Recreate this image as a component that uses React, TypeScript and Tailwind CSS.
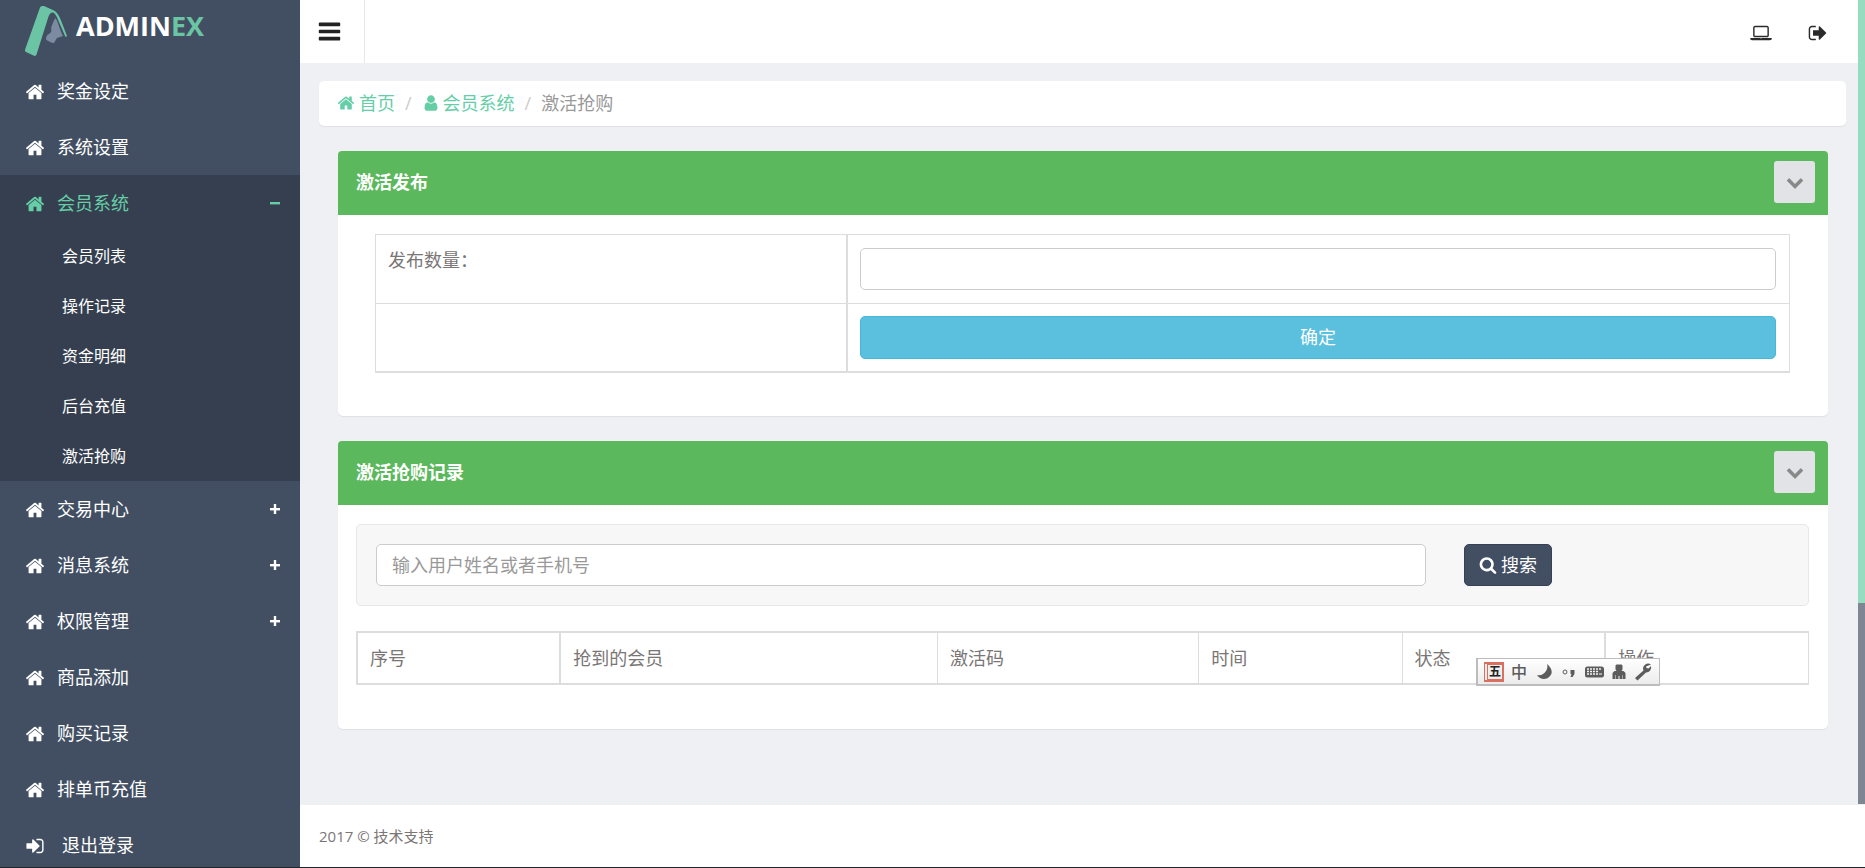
import React, { useState } from "react";
import clsx from "clsx";

const ICONS = {
  home: "M1472 992v480q0 26-19 45t-45 19h-384v-384h-256v384h-384q-26 0-45-19t-19-45v-480q0-1 .5-3t.5-3l575-474 575 474q1 2 1 6zm223-69l-62 74q-8 9-21 11h-3q-13 0-21-7l-692-577-692 577q-12 8-24 7-13-2-21-11l-62-74q-8-10-7-23.5t11-21.5l719-599q32-26 76-26t76 26l244 204v-195q0-14 9-23t23-9h192q14 0 23 9t9 23v408l219 182q10 8 11 21.5t-7 23.5z",
  signIn:
    "M1312 896q0 26-19 45l-544 544q-19 19-45 19t-45-19-19-45v-288h-448q-26 0-45-19t-19-45v-384q0-26 19-45t45-19h448v-288q0-26 19-45t45-19 45 19l544 544q19 19 19 45zm352-352v704q0 119-84.5 203.5t-203.5 84.5h-320q-13 0-22.5-9.5t-9.5-22.5q0-4-1-20t-.5-26.5 3-23.5 10-19.5 20.5-6.5h320q66 0 113-47t47-113v-704q0-66-47-113t-113-47h-312l-11.5-1-11.5-3-8-5.5-7-9-2-13.5q0-4-1-20t-.5-26.5 3-23.5 10-19.5 20.5-6.5h320q119 0 203.5 84.5t84.5 203.5z",
  signOut:
    "M704 1440q0 4 1 20t.5 26.5-3 23.5-10 19.5-20.5 6.5h-320q-119 0-203.5-84.5t-84.5-203.5v-704q0-119 84.5-203.5t203.5-84.5h320q13 0 22.5 9.5t9.5 22.5q0 4 1 20t.5 26.5-3 23.5-10 19.5-20.5 6.5h-320q-66 0-113 47t-47 113v704q0 66 47 113t113 47h312l11.5 1 11.5 3 8 5.5 7 9 2 13.5zm928-544q0 26-19 45l-544 544q-19 19-45 19t-45-19-19-45v-288h-448q-26 0-45-19t-19-45v-384q0-26 19-45t45-19h448v-288q0-26 19-45t45-19 45 19l544 544q19 19 19 45z",
  search:
    "M1216 832q0-185-131.5-316.5t-316.5-131.5-316.5 131.5-131.5 316.5 131.5 316.5 316.5 131.5 316.5-131.5 131.5-316.5zm512 832q0 52-38 90t-90 38q-54 0-90-38l-343-342q-179 124-399 124-143 0-273.5-55.5t-225-150-150-225-55.5-273.5 55.5-273.5 150-225 225-150 273.5-55.5 273.5 55.5 225 150 150 225 55.5 273.5q0 220-124 399l343 343q37 37 37 90z",
  chevron:
    "M1683 808l-742 741q-19 19-45 19t-45-19l-742-741q-19-19-19-45.5t19-45.5l166-165q19-19 45-19t45 19l531 531 531-531q19-19 45-19t45 19l166 165q19 19 19 45.5t-19 45.5z",
  user: "M1536 1399q0 109-62.5 187t-150.5 78h-854q-88 0-150.5-78t-62.5-187q0-85 8.5-160.5t31.5-152 58.5-131 94-89 134.5-34.5q131 128 313 128t313-128q76 0 134.5 34.5t94 89 58.5 131 31.5 152 8.5 160.5zm-256-887q0 159-112.5 271.5t-271.5 112.5-271.5-112.5-112.5-271.5 112.5-271.5 271.5-112.5 271.5 112.5 112.5 271.5z",
  laptop:
    "M416 1280q-66 0-113-47t-47-113v-704q0-66 47-113t113-47h1088q66 0 113 47t47 113v704q0 66-47 113t-113 47h-1088zm-32-864v704q0 13 9.5 22.5t22.5 9.5h1088q13 0 22.5-9.5t9.5-22.5v-704q0-13-9.5-22.5t-22.5-9.5h-1088q-13 0-22.5 9.5t-9.5 22.5zm1376 928h160v96q0 40-47 68t-113 28h-1600q-66 0-113-28t-47-68v-96h160 1600zm-720 96q16 0 16-16t-16-16h-160q-16 0-16 16t16 16h160z",
  bars: "M1664 1344v128q0 26-19 45t-45 19h-1408q-26 0-45-19t-19-45v-128q0-26 19-45t45-19h1408q26 0 45 19t19 45zm0-512v128q0 26-19 45t-45 19h-1408q-26 0-45-19t-19-45v-128q0-26 19-45t45-19h1408q26 0 45 19t19 45zm0-512v128q0 26-19 45t-45 19h-1408q-26 0-45-19t-19-45v-128q0-26 19-45t45-19h1408q26 0 45 19t19 45z",
};

function Icon({
  name,
  className,
  width = 1792,
}: {
  name: keyof typeof ICONS;
  className?: string;
  width?: number;
}) {
  return (
    <svg
      viewBox={`0 0 ${width} 1792`}
      fill="currentColor"
      aria-hidden="true"
      className={clsx("shrink-0", className)}
    >
      <path d={ICONS[name]} />
    </svg>
  );
}

type MenuItem = {
  label: string;
  icon?: keyof typeof ICONS;
  children?: string[];
  expandable?: boolean;
};

const MENU: MenuItem[] = [
  { label: "奖金设定" },
  { label: "系统设置" },
  {
    label: "会员系统",
    expandable: true,
    children: ["会员列表", "操作记录", "资金明细", "后台充值", "激活抢购"],
  },
  { label: "交易中心", expandable: true },
  { label: "消息系统", expandable: true },
  { label: "权限管理", expandable: true },
  { label: "商品添加" },
  { label: "购买记录" },
  { label: "排单币充值" },
  { label: "退出登录", icon: "signIn" },
];

function Logo() {
  return (
    <a href="#" className="flex h-[63px] items-start pt-[5px] pl-6">
      <svg viewBox="0 0 45 52" className="h-[52px] w-[45px]" aria-hidden="true">
        <path
          d="M31.500 13c2 3 3.500 8 4.500 11 .8 2.500 2 5 3 7l-6 2c-1 1.500-2 3.500-3 5-3 0-6-2-8-3.500 0-2 .5-4 2-5 2-1 3-2 3.500-4-.5-1-.5-2.500 0-4 1.500-3 2-6 4-8.500z"
          fill="#7c8ba1"
        />
        <path
          d="M16 2.500C17 1 18.500.8 20 1l10 4.500c3 1.500 5 5 7 10l6 15.500-1.500 1L35 17c-2-5-3.500-8.500-6-9.500-2-.5-3.500 1.500-4.500 4L12.500 49.500c-.5 1.300-1.500 1.700-2.500 1.300L2 47c-1-.6-1.300-1.500-.8-2.800z"
          fill="#6bc5a4"
        />
      </svg>
      <span className="pl-[7px] font-['Open_Sans'] text-[27px] leading-[42px] font-bold text-white">
        ADMIN<span className="text-[#6bc5a4]">EX</span>
      </span>
    </a>
  );
}

function Sidebar() {
  const [open, setOpen] = useState("会员系统");

  return (
    <aside className="w-[300px] shrink-0 overflow-hidden bg-[#424f63] text-white">
      <Logo />
      <ul>
        {MENU.map((item) => {
          const active = item.label === open;
          return (
            <li key={item.label} className={clsx(active && "bg-[#353f4f]")}>
              <a
                href="#"
                onClick={() => item.children && setOpen(active ? "" : item.label)}
                className={clsx(
                  "flex h-14 items-center pr-5 pl-[25px]",
                  active && "text-[#65cea7]",
                )}
              >
                <Icon name={item.icon ?? "home"} className="mt-0.5 size-5" />
                <span className={clsx("flex-1", item.icon ? "pl-[17px]" : "pl-3")}>
                  {item.label}
                </span>
                {item.expandable && (
                  <svg viewBox="0 0 10 10" className="size-[10px]" fill="currentColor">
                    <path d="M0 4h10v2.400H0z" />
                    {!active && <path d="M3.800 0h2.400v10H3.800z" />}
                  </svg>
                )}
              </a>
              {active && item.children && (
                <ul>
                  {item.children.map((child) => (
                    <li key={child}>
                      <a href="#" className="flex h-[50px] items-center pl-[62px] text-base">
                        {child}
                      </a>
                    </li>
                  ))}
                </ul>
              )}
            </li>
          );
        })}
      </ul>
    </aside>
  );
}

function Panel({
  title,
  children,
}: {
  title: string;
  children: React.ReactNode;
}) {
  return (
    <section className="rounded-[5px] bg-white shadow-[0_1px_1px_rgba(0,0,0,0.07)]">
      <header className="flex h-16 items-center justify-between rounded-t-[4px] bg-[#5cb85c] pr-[13px] pb-0.5 pl-[18px]">
        <h2 className="font-bold text-white">{title}</h2>
        <button
          type="button"
          aria-label="收起"
          className="flex h-[42px] w-[41px] items-center justify-center rounded-[3px] bg-[#e2e3e7] text-[#888]"
        >
          <Icon name="chevron" className="size-[18px]" />
        </button>
      </header>
      {children}
    </section>
  );
}

const COLUMNS = [
  { label: "序号", className: "w-[14%] border-l-2" },
  { label: "抢到的会员", className: "w-[26%] border-l-2" },
  { label: "激活码", className: "w-[18%] border-l" },
  { label: "时间", className: "w-[14%] border-l" },
  { label: "状态", className: "w-[14%] border-l" },
  { label: "操作", className: "w-[14%] border-l-2 border-r" },
];

// Floating input method bar
function ImeBar() {
  return (
    <div className="absolute top-[658px] right-[205px] flex h-7 w-[184px] items-center border border-b-2 border-l-2 border-[#bcbcbc] bg-linear-to-b from-white to-[#ececec] pl-1.5 text-[#5c5c5c]">
      <span className="flex size-5 items-end justify-end border-t-2 border-r border-b-2 border-l border-[#d9705f] bg-[#fbeeeb]">
        <span className="flex size-4 items-center justify-center border border-[#d9705f] bg-[#eee] text-[12px] leading-3 font-bold text-[#222]">
          五
        </span>
      </span>
      <span className="pl-[7px] text-base leading-5 font-medium">中</span>
      <svg viewBox="0 0 128 22" className="h-[22px] w-32" fill="currentColor" aria-hidden="true">
        <path d="M20 3c5 4 6 9 3 12-3 4-10 4-13-1 4 1 7-1 9-4 1-2 2-4 1-7z" />
        <circle cx="38" cy="11" r="2" fill="none" stroke="currentColor" />
        <path d="M43.500 9h4v4l-2 3h-2l1-3h-1z" />
        <rect x="58" y="5.500" width="19" height="11" rx="2.500" />
        <path
          d="M60 8h15M60 10.500h12M60 13h12"
          stroke="#f4f4f4"
          strokeWidth="1.500"
          strokeDasharray="2 1"
        />
        <path d="M72 13h3" stroke="#f4f4f4" />
        <path d="M89.500 3.500h5l1 1v4l-1 1.500h2l2 2v6h-3v-4h-.5v4h-2.500v-3h-1v3h-2.500v-4h-.5v4h-3v-6l2-2h2l-1-1.500v-4z" />
        <path d="M124 3.500a5 5 0 0 0-7.500 6L108 17l2.500 2.500 8.500-8a5 5 0 0 0 5-6.500l-2.500 2.500-2-.5-.5-1.500z" />
      </svg>
    </div>
  );
}

export default function App() {
  const [amount, setAmount] = useState("");
  const [keyword, setKeyword] = useState("");

  return (
    <div className="relative flex h-screen overflow-hidden border-b border-[#20242b] bg-[#eff0f4] font-['Open_Sans','Noto_Sans_CJK_SC',sans-serif] text-lg leading-[26px] text-[#7a7676]">
      <Sidebar />

      <div className="flex min-w-0 flex-1 flex-col">
        <header className="flex h-[63px] shrink-0 items-center justify-between bg-white text-[#2a2a2a]">
          <button
            type="button"
            aria-label="菜单"
            className="flex h-full w-[65px] items-center border-r border-[#e7e7e7] pl-[17px]"
          >
            <Icon name="bars" className="size-[25px] text-[#222]" />
          </button>
          <nav className="flex items-center gap-9 pt-0.5 pr-[37px]">
            <a href="#" aria-label="桌面">
              <Icon name="laptop" width={1920} className="h-5 w-[22px]" />
            </a>
            <a href="#" aria-label="退出">
              <Icon name="signOut" className="size-5" />
            </a>
          </nav>
        </header>

        <main className="flex-1 px-[19px] pt-[18px]">
          <ol className="flex h-[45px] items-center rounded-[5px] bg-white px-[18px] pb-0.5 text-[#999] shadow-[0_1px_1px_rgba(0,0,0,0.07)]">
            <li>
              <a href="#" className="flex items-center gap-1 text-[#65cea7]">
                <Icon name="home" className="size-[18px]" />
                首页
              </a>
            </li>
            <li className="px-[10px] text-[#ccc]">/</li>
            <li>
              <a href="#" className="flex items-center gap-[3px] text-[#65cea7]">
                <Icon name="user" className="size-[18px]" />
                会员系统
              </a>
            </li>
            <li className="px-[10px] text-[#ccc]">/</li>
            <li>激活抢购</li>
          </ol>

          <div className="flex flex-col gap-[25px] pt-[25px] pr-[18px] pl-[19px]">
            <Panel title="激活发布">
              <form
                className="pt-[19px] pr-[38px] pb-[43px] pl-[37px]"
                onSubmit={(e) => e.preventDefault()}
              >
                <table className="w-full table-fixed border-collapse border border-b-2 border-[#ddd]">
                  <tbody>
                    <tr>
                      <td className="w-1/3 border-b border-[#ddd] px-3 pt-3 pb-[13px] align-top">
                        <label htmlFor="amount">发布数量：</label>
                      </td>
                      <td className="border-b border-l-2 border-[#ddd] p-[13px] pl-3">
                        <input
                          id="amount"
                          value={amount}
                          onChange={(e) => setAmount(e.target.value)}
                          className="block h-[42px] w-full rounded-[5px] border border-[#ccc] bg-white px-[15px]"
                        />
                      </td>
                    </tr>
                    <tr>
                      <td />
                      <td className="border-l-2 border-[#ddd] px-[13px] py-3 pl-3">
                        <button
                          type="submit"
                          className="block h-[43px] w-full rounded-[5px] border border-[#46b8da] bg-[#5bc0de] pb-0.5 text-white"
                        >
                          确定
                        </button>
                      </td>
                    </tr>
                  </tbody>
                </table>
              </form>
            </Panel>

            <Panel title="激活抢购记录">
              <div className="pt-[19px] pr-[19px] pb-11 pl-[18px]">
                <form
                  className="flex items-center gap-[38px] rounded-[5px] border border-[#e7e7e7] bg-[#f7f7f7] px-[19px] py-[19px]"
                  onSubmit={(e) => e.preventDefault()}
                >
                  <input
                    aria-label="输入用户姓名或者手机号"
                    placeholder="输入用户姓名或者手机号"
                    value={keyword}
                    onChange={(e) => setKeyword(e.target.value)}
                    className="h-[42px] w-[1050px] max-w-3/4 rounded-[5px] border border-[#ccc] bg-white px-[15px] placeholder:text-[#999]"
                  />
                  <button
                    type="submit"
                    className="flex h-[42px] items-center gap-1 rounded-[5px] border border-[#374152] bg-[#424f63] px-[14px] text-white"
                  >
                    <Icon name="search" className="size-[18px]" />
                    搜索
                  </button>
                </form>

                <table className="mt-[25px] w-full table-fixed border-collapse">
                  <thead>
                    <tr>
                      {COLUMNS.map((col) => (
                        <th
                          key={col.label}
                          className={clsx(
                            "border-y-2 border-[#ddd] p-3 text-left font-normal",
                            col.className,
                          )}
                        >
                          {col.label}
                        </th>
                      ))}
                    </tr>
                  </thead>
                </table>
              </div>
            </Panel>
          </div>
        </main>

        <footer className="flex h-[62px] shrink-0 items-center bg-white px-[19px] text-[15px]">
          2017 © 技术支持
        </footer>
      </div>

      {/* Scroll track over the right edge */}
      <div className="absolute top-0 right-0 flex h-[804px] w-[7px] flex-col bg-[#7e8694]">
        <div className="h-3/4 bg-[#95dcc1]" />
      </div>

      <ImeBar />
    </div>
  );
}
